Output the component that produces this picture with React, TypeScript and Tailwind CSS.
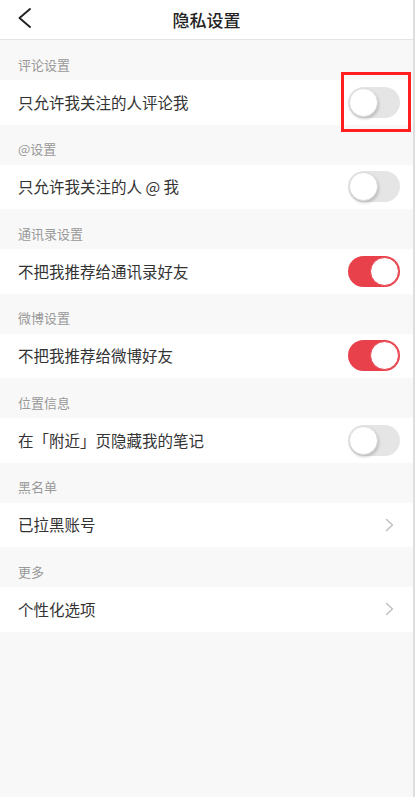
type Row = { label: string, kind: 'off' | 'on' | 'link', mark?: boolean }

const sections: { title: string, row: Row }[] = [
  { title: '评论设置', row: { label: '只允许我关注的人评论我', kind: 'off', mark: true } },
  { title: '@设置', row: { label: '只允许我关注的人 @ 我', kind: 'off' } },
  { title: '通讯录设置', row: { label: '不把我推荐给通讯录好友', kind: 'on' } },
  { title: '微博设置', row: { label: '不把我推荐给微博好友', kind: 'on' } },
  { title: '位置信息', row: { label: '在「附近」页隐藏我的笔记', kind: 'off' } },
  { title: '黑名单', row: { label: '已拉黑账号', kind: 'link' } },
  { title: '更多', row: { label: '个性化选项', kind: 'link' } },
]

function Toggle({ on }: { on: boolean }) {
  if (on) {
    return (
      <div className="flex h-[31px] w-[52px] items-center justify-end rounded-full bg-[#e8414b] pr-[1px]">
        <div className="h-[29px] w-[29px] rounded-full border-[1.5px] border-[#e8414b] bg-white" />
      </div>
    )
  }
  return (
    <div className="flex h-[31px] w-[52px] items-center rounded-full bg-[#e5e5e5] pl-[1px]">
      <div className="h-[29px] w-[29px] rounded-full border border-[#dcdcdc] bg-white shadow-[1px_2px_3px_rgba(0,0,0,0.18)]" />
    </div>
  )
}

export default function App() {
  return (
    <div
      className="flex min-h-[797px] w-[415px] flex-col border-r-2 border-[#dedede] bg-[#f8f8f8]"
      style={{ fontFamily: '"Noto Sans CJK SC", "Noto Sans", sans-serif' }}
    >
      <div className="relative flex h-[40px] items-center justify-center border-b border-[#e4e4e4] bg-white">
        <svg className="absolute left-[17px] top-[8px] h-[20px] w-[15px]" viewBox="0 0 15 20" fill="none">
          <polyline points="13,1 2.5,10 13,19" stroke="#222" strokeWidth="1.9" strokeLinecap="round" strokeLinejoin="round" />
        </svg>
        <div className="text-[17px] font-medium text-[#222]">隐私设置</div>
      </div>
      {sections.map((s) => (
        <div key={s.title}>
          <div className="flex h-[40px] items-center px-[18px] pt-[9px] text-[13px] text-[#999]">
            {s.title}
          </div>
          <div className="flex h-[44.5px] items-center justify-between bg-white pl-[18px] pr-[13px]">
            <div className="text-[15.5px] text-[#333]">{s.row.label}</div>
            {s.row.kind === 'link' ? (
              <svg className="mr-[6px] h-[14px] w-[9px]" viewBox="0 0 9 14" fill="none">
                <polyline points="1.5,1.5 7.5,7 1.5,12.5" stroke="#bcbcbc" strokeWidth="1.3" strokeLinecap="round" strokeLinejoin="round" />
              </svg>
            ) : (
              <div className="relative">
                <Toggle on={s.row.kind === 'on'} />
                {s.row.mark && (
                  <div className="absolute -left-[7px] -right-[11px] -top-[15px] -bottom-[14px] border-[3px] border-[#ff1f1f]" />
                )}
              </div>
            )}
          </div>
        </div>
      ))}
    </div>
  )
}
